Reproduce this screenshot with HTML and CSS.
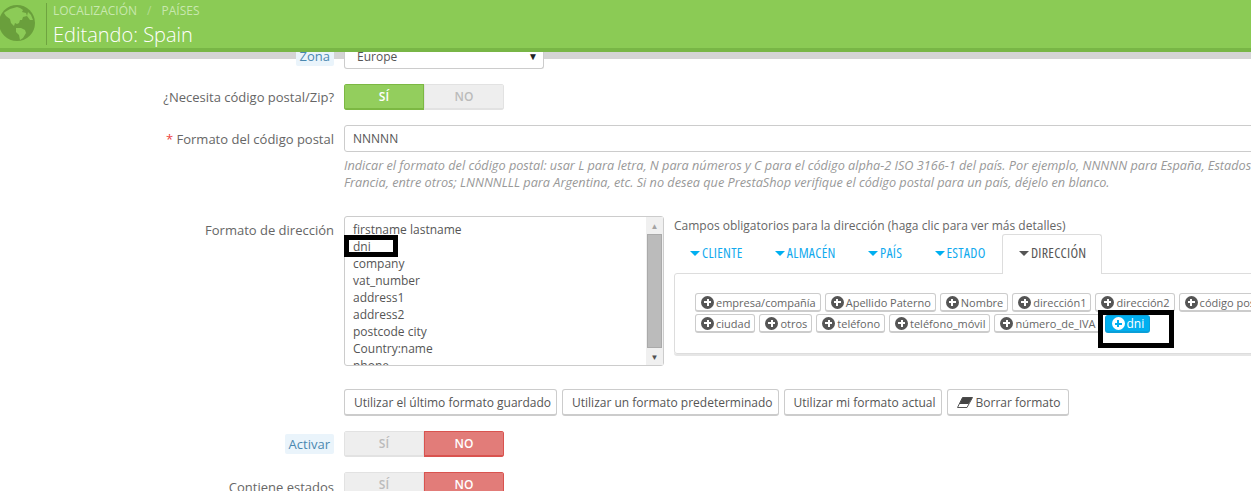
FILE: index.html
```html
<!DOCTYPE html>
<html lang="es">
<head>
<meta charset="utf-8">
<title>Editando: Spain</title>
<link rel="stylesheet" href="styles.css">
</head>
<body>
<header class="topbar">
  <svg class="globe" viewBox="0 0 36 36" width="36" height="36" aria-hidden="true">
    <circle cx="18" cy="18" r="18" fill="#6a9f3c"/>
    <path d="M6 7l5-3 7-2 3 1 3 2-1 2 4 1 1 3-4 1-1 3-2 0-1 3-2 1-2-1-1 3-3-3-1-4-4-3-2-3z" fill="#8ccb57"/>
    <path d="M17 23l5 0 4 2 1 3-3 5-3 2-1-5-3-3z" fill="#8ccb57"/>
    <path d="M29 7l3 3 2 5-3 0-3-4z" fill="#8ccb57"/>
  </svg>
  <div class="titles">
    <div class="crumbs"><span>LOCALIZACIÓN</span><span class="sep">/</span><span>PAÍSES</span></div>
    <h1>Editando: Spain</h1>
  </div>
</header>
<div class="header-shade"></div>
<main class="form">
  <div class="row row-zona">
    <div class="label"><span class="hint">Zona</span></div>
    <div class="select">Europe<span class="caret">▼</span></div>
  </div>
  <div class="row row-zip">
    <div class="label">¿Necesita código postal/Zip?</div>
    <div class="switch"><span class="on-green">SÍ</span><span class="off">NO</span></div>
  </div>
  <div class="row row-format">
    <div class="label"><span class="req">*</span> Formato del código postal</div>
    <div class="field-wrap">
      <div class="input">NNNNN</div>
      <p class="help">Indicar el formato del código postal: usar L para letra, N para números y C para el código alpha-2 ISO 3166-1 del país. Por ejemplo, NNNNN para España, Estados Unidos, Italia, entre otros; NNNNNN para<br>Francia, entre otros; LNNNNLLL para Argentina, etc. Si no desea que PrestaShop verifique el código postal para un país, déjelo en blanco.</p>
    </div>
  </div>
  <div class="row row-address">
    <div class="label">Formato de dirección</div>
    <div class="textarea">
      <div class="textarea-clip">
        <div class="lines">firstname lastname<br>dni<br>company<br>vat_number<br>address1<br>address2<br>postcode city<br>Country:name<br>phone</div>
        <div class="scrollbar"><span class="arrow">▲</span><span class="thumb"></span><span class="arrow">▼</span></div>
      </div>
      <span class="mark-dni"></span>
    </div>
    <div class="fields">
      <div class="fields-title">Campos obligatorios para la dirección (haga clic para ver más detalles)</div>
      <div class="tabs">
        <span class="tab"><i class="tri"></i>CLIENTE</span>
        <span class="tab"><i class="tri"></i>ALMACÉN</span>
        <span class="tab"><i class="tri"></i>PAÍS</span>
        <span class="tab"><i class="tri"></i>ESTADO</span>
        <span class="tab active"><i class="tri"></i>DIRECCIÓN</span>
      </div>
      <div class="panel">
        <div class="chips">
          <span class="chip"><i class="plus"></i>empresa/compañía</span>
          <span class="chip"><i class="plus"></i>Apellido Paterno</span>
          <span class="chip"><i class="plus"></i>Nombre</span>
          <span class="chip"><i class="plus"></i>dirección1</span>
          <span class="chip"><i class="plus"></i>dirección2</span>
          <span class="chip"><i class="plus"></i>código postal</span>
        </div>
        <div class="chips">
          <span class="chip"><i class="plus"></i>ciudad</span>
          <span class="chip"><i class="plus"></i>otros</span>
          <span class="chip"><i class="plus"></i>teléfono</span>
          <span class="chip"><i class="plus"></i>teléfono_móvil</span>
          <span class="chip"><i class="plus"></i>número_de_IVA</span>
          <span class="chip chip-blue"><i class="plus"></i>dni</span>
        </div>
        <span class="mark-box"></span>
      </div>
    </div>
  </div>
  <div class="row row-buttons">
    <div class="label"></div>
    <div class="buttons">
      <span class="btn">Utilizar el último formato guardado</span>
      <span class="btn">Utilizar un formato predeterminado</span>
      <span class="btn">Utilizar mi formato actual</span>
      <span class="btn"><svg class="eraser" viewBox="0 0 16 11" width="16" height="11" aria-hidden="true"><path d="M5.5.5h10L10 10.5H.5z" fill="#fff" stroke="#555" stroke-width="1"/><path d="M5.5.5h10L11.5 7H2.5z" fill="#444"/></svg>Borrar formato</span>
    </div>
  </div>
  <div class="row row-active">
    <div class="label"><span class="hint">Activar</span></div>
    <div class="switch"><span class="off">SÍ</span><span class="on-red">NO</span></div>
  </div>
  <div class="row row-states">
    <div class="label">Contiene estados</div>
    <div class="switch"><span class="off">SÍ</span><span class="on-red">NO</span></div>
  </div>
</main>
</body>
</html>
```
FILE: styles.css
```css
* { box-sizing: border-box; }
html, body { margin: 0; height: 491px; overflow: hidden; background: #fff; }
body { font-family: "Open Sans", "Liberation Sans", sans-serif; font-size: 12px; color: #666; position: relative; }

.topbar {
  position: absolute; left: 0; top: 0; right: 0; z-index: 5;
  height: 52px; background: #8bcb55; border-bottom: 4px solid #78b646;
  display: flex;
}
.header-shade { position: absolute; left: 0; right: 0; top: 52px; height: 7px; background: #d4d4d4; }
.globe { flex: none; margin: 5px 0 0 -1px; width: 36px; height: 36px; }
.titles { margin: 3px 0 0 11px; border-left: 1px solid #6fa440; padding-left: 6px; height: 42px; }
.crumbs { font-size: 12px; line-height: 15px; color: #c8e8ae; display: flex; gap: 10px; }
.crumbs .sep { color: #b4dc92; }
h1 { margin: 4px 0 0; font-size: 20px; line-height: 26px; font-weight: 300; color: #fff; }

.form { position: relative; width: 1700px; padding-top: 43px; }
.row { display: flex; align-items: flex-start; }
.label { flex: none; width: 334px; margin-right: 10px; text-align: right; font-size: 13px; line-height: 18px; }
.hint { background: #eaf4fb; color: #4a88b0; padding: 1px 4px; border-radius: 2px; }
.req { color: #e44; }

.select { position: relative; width: 200px; height: 26px; background: #fff; border: 1px solid #ccc; border-top: 0; border-radius: 0 0 3px 3px; padding: 5px 12px; line-height: 18px; font-size: 12px; color: #555; }
.caret { position: absolute; right: 5px; top: 8px; font-size: 10px; line-height: 10px; color: #222; }
.row-zona .label { padding-top: 4px; }

.row-zip { margin-top: 15px; }
.row-zip .label { padding-top: 4px; }
.switch { display: flex; width: 160px; height: 26px; border-radius: 3px; overflow: hidden; font-size: 12px; font-weight: 600; line-height: 24px; text-align: center; }
.switch span { flex: 1; }
.on-green { background: #93ce5d; color: #fff; border: 1px solid #7cb843; border-bottom-width: 2px; }
.on-red { background: #e27c79; color: #fff; border: 1px solid #d9534f; border-bottom-width: 2px; }
.off { background: #eee; color: #bbb; border: 1px solid #e2e2e2; border-bottom-width: 2px; }

.row-format { margin-top: 15px; }
.row-format .label { padding-top: 5px; }
.field-wrap { width: 1300px; }
.input { height: 27px; border: 1px solid #ccc; border-radius: 3px; padding: 4px 8px; font-size: 12px; line-height: 18px; color: #555; }
.help { margin: 5px 0 0; font-size: 12.7px; line-height: 17px; font-style: italic; color: #999; white-space: nowrap; }

.row-address { margin-top: 25px; }
.row-address .label { padding-top: 5px; }
.textarea { position: relative; flex: none; width: 320px; height: 150px; border: 1px solid #ccc; border-radius: 3px; }
.textarea-clip { display: flex; height: 100%; overflow: hidden; }
.lines { flex: 1; padding: 4px 8px; font-size: 12px; line-height: 17px; color: #555; }
.mark-dni { position: absolute; left: -1px; top: 18px; width: 54px; height: 22px; border: 5px solid #000; }
.scrollbar { flex: none; width: 17px; background: #f0f0f0; display: flex; flex-direction: column; align-items: center; }
.arrow { height: 17px; font-size: 8px; line-height: 17px; color: #505050; }
.arrow:first-child { color: #a3a3a3; }
.thumb { flex: 1; width: 15px; background: #bbb; border: 1px solid #aaa; }

.fields { margin-left: 10px; width: 700px; }
.fields-title { margin-top: 1px; line-height: 17px; }
.tabs { display: flex; height: 39px; position: relative; z-index: 1; }
.tab { padding: 9px 16.3px 0 16px; font-size: 14px; font-stretch: 75%; font-weight: 400; letter-spacing: .25px; color: #12aaee; white-space: nowrap; }
.tab.active { color: #555; background: #fff; border: 1px solid #ddd; border-bottom: 0; border-radius: 3px 3px 0 0; padding: 8px 15px 0 16px; height: 40px; }
.tri { display: inline-block; border-left: 5px solid transparent; border-right: 5px solid transparent; border-top: 5px solid #00aff0; margin: 0 2px 2px 0; vertical-align: middle; }
.active .tri { border-top-color: #555; }
.panel { position: relative; width: 700px; height: 81px; border: 1px solid #ddd; border-radius: 3px; box-shadow: 0 2px 0 #e6e6e6; padding: 19px 20px 0; }
.chips { display: flex; gap: 4px; height: 21px; }
.chip { height: 19px; border: 1px solid #ccc; border-bottom-width: 2px; border-radius: 3px; padding: 0 4px 0 5px; font-size: 11px; line-height: 17px; color: #666; background: #fff; white-space: nowrap; display: inline-flex; align-items: center; gap: 2px; }
.plus { flex: none; position: relative; width: 13px; height: 13px; border-radius: 50%; background: #555; }
.plus::before, .plus::after { content: ""; position: absolute; background: #fff; }
.plus::before { left: 3px; right: 3px; top: 5.5px; height: 2px; }
.plus::after { top: 3px; bottom: 3px; left: 5.5px; width: 2px; }
.chip-blue { position: relative; z-index: 1; margin-top: 1px; height: 18px; padding: 0 5px 0 6px; font-size: 12px; background: #00aff0; border-color: #0a9fd8; color: #fff; }
.chip-blue .plus { background: #fff; }
.chip-blue .plus::before, .chip-blue .plus::after { background: #00aff0; }
.mark-box { position: absolute; left: 423px; top: 36px; width: 76px; height: 38px; border: 5px solid #000; }

.row-buttons { margin-top: 23px; }
.buttons { display: flex; gap: 5px; }
.btn { height: 27px; border: 1px solid #ccc; border-bottom-width: 2px; border-radius: 3px; padding: 0 5px 0 9px; font-size: 12px; line-height: 25px; color: #555; background: #fff; white-space: nowrap; display: inline-flex; align-items: center; gap: 3px; }
.btn:last-child { padding-right: 8px; }
.eraser { flex: none; }

.row-active { margin-top: 15px; }
.row-active .label { padding-top: 4px; }
.row-states { margin-top: 15px; }
.row-states .label { padding-top: 6px; }
```
